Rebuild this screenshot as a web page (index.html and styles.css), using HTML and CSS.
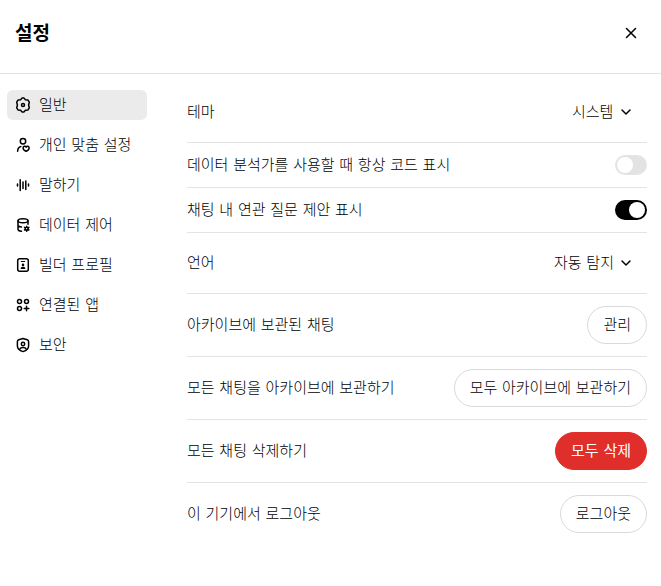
FILE: index.html
```
<!DOCTYPE html>
<html lang="ko">
<head>
  <meta charset="UTF-8">
  <meta name="viewport" content="width=device-width, initial-scale=1.0">
  <title>설정</title>
  <link rel="stylesheet" href="styles.css">
</head>
<body>
  <header class="header">
    <h1>설정</h1>
    <button class="close-btn" type="button" aria-label="닫기">
      <svg width="18" height="18" viewBox="0 0 18 18"><path d="M4.500 4.500l9 9M13.500 4.500l-9 9"/></svg>
    </button>
  </header>

  <div class="content">
    <nav class="menu">
      <button class="menu-item active" type="button">
        <svg viewBox="0 0 18 18"><path d="M7.900 2.100H10.100L11.400 3.700 14 4.100 15.300 6.200 14.600 9 15.300 11.800 14 13.900 11.400 14.300 10.100 15.900H7.900L6.600 14.300 4 13.900 2.700 11.800 3.400 9 2.700 6.200 4 4.100 6.600 3.700Z"/><circle cx="9" cy="9" r="1.500"/></svg>
        일반
      </button>
      <button class="menu-item" type="button">
        <svg viewBox="0 0 18 18"><circle cx="9" cy="5.200" r="2.700"/><path d="M3.600 15.200C3.800 12.600 5 11 6.800 10.500M12.100 15.300C10.200 14.400 9.100 13.200 9.100 11.900 9.100 10.100 11.300 9.700 12.100 11.100 12.900 9.700 15.100 10.100 15.100 11.900 15.100 13.200 14 14.400 12.100 15.300Z"/></svg>
        개인 맞춤 설정
      </button>
      <button class="menu-item" type="button">
        <svg viewBox="0 0 18 18"><path d="M3.500 8v2M6.200 3.800v10.600M9 6v6.500M11.800 5v8.500M14.500 8v2"/></svg>
        말하기
      </button>
      <button class="menu-item" type="button">
        <svg viewBox="0 0 18 18"><ellipse cx="9" cy="4.700" rx="5" ry="2"/><path d="M4 4.700v8.600c0 1.200 1.500 1.900 3.500 2M14 4.700v3.500M4 9c0 1 1.500 1.800 3.500 1.900"/><circle cx="12.700" cy="12.700" r="1.500"/><path d="M12.700 10.200v1M12.700 14.200v1M10.500 11.400l.9.500M14 13.500l.9.500M10.500 14l.9-.5M14 11.900l.9-.5"/></svg>
        데이터 제어
      </button>
      <button class="menu-item" type="button">
        <svg viewBox="0 0 18 18"><rect x="3.700" y="2.700" width="10.600" height="12.600" rx="2"/><path class="thin" d="M7.300 5.500h3.400M7.200 12.400c.5-1.300 3.100-1.300 3.600 0z"/><circle class="thin" cx="9" cy="8.900" r=".7"/></svg>
        빌더 프로필
      </button>
      <button class="menu-item" type="button">
        <svg viewBox="0 0 18 18"><circle cx="5.500" cy="5.500" r="2"/><circle cx="12.500" cy="5.500" r="2"/><circle cx="5.500" cy="12.500" r="2"/><path d="M12.500 10.200v4.600M10.200 12.500h4.600"/></svg>
        연결된 앱
      </button>
      <button class="menu-item" type="button">
        <svg viewBox="0 0 18 18"><path d="M9 2.500l4.300 1.300q1.300.5 1.300 1.800v4.400c0 2.700-2.300 4.600-5.600 5.600-3.300-1-5.600-2.900-5.600-5.600v-4.400q0-1.300 1.300-1.800z"/><circle cx="9" cy="8" r="1.700"/><path d="M5.700 13.300c1-2.300 5.600-2.300 6.600 0"/></svg>
        보안
      </button>
    </nav>

    <main class="settings">
      <div class="row">
        <label for="theme">테마</label>
        <span class="select-box">
          <select id="theme">
            <option>시스템</option>
          </select>
          <svg width="12" height="12" viewBox="0 0 12 12"><path d="M2 4l4 4 4-4"/></svg>
        </span>
      </div>
      <div class="row">
        <label for="show-code">데이터 분석가를 사용할 때 항상 코드 표시</label>
        <input class="switch" type="checkbox" id="show-code">
      </div>
      <div class="row">
        <label for="suggestions">채팅 내 연관 질문 제안 표시</label>
        <input class="switch" type="checkbox" id="suggestions" checked>
      </div>
      <div class="row">
        <label for="language">언어</label>
        <span class="select-box">
          <select id="language">
            <option>자동 탐지</option>
          </select>
          <svg width="12" height="12" viewBox="0 0 12 12"><path d="M2 4l4 4 4-4"/></svg>
        </span>
      </div>
      <div class="row">
        <span id="archived-label">아카이브에 보관된 채팅</span>
        <button class="btn" type="button" aria-describedby="archived-label">관리</button>
      </div>
      <div class="row">
        <span id="archive-label">모든 채팅을 아카이브에 보관하기</span>
        <button class="btn" type="button" aria-describedby="archive-label">모두 아카이브에 보관하기</button>
      </div>
      <div class="row">
        <span id="delete-label">모든 채팅 삭제하기</span>
        <button class="btn btn-danger" type="button" aria-describedby="delete-label">모두 삭제</button>
      </div>
      <div class="row">
        <span id="logout-label">이 기기에서 로그아웃</span>
        <button class="btn" type="button" aria-describedby="logout-label">로그아웃</button>
      </div>
    </main>
  </div>
</body>
</html>
```
FILE: styles.css
```
* {
  box-sizing: border-box;
}
body {
  margin: 0;
  background: #fff;
  color: #000;
  font-family: "DejaVu Sans", "Noto Sans CJK KR", sans-serif;
  font-size: 15px;
  font-weight: 300;
  line-height: 20px;
}
button, select {
  font: inherit;
  color: inherit;
  cursor: pointer;
}
svg {
  flex-shrink: 0;
  fill: none;
  stroke: currentColor;
  stroke-width: 1.5;
  stroke-linecap: round;
  stroke-linejoin: round;
}
svg .thin {
  stroke-width: 1.2;
}

/* Header */
.header {
  display: flex;
  align-items: center;
  justify-content: space-between;
  padding: 18px 15px 25px;
  border-bottom: 1px solid #e3e3e3;
}
.header h1 {
  margin: 0;
  font-size: 19px;
  line-height: 28px;
  font-weight: bold;
}
.close-btn {
  display: flex;
  padding: 6px;
  border: none;
  background: none;
}

/* Layout */
.content {
  display: flex;
  gap: 40px;
  padding: 8px 14px 8px 7px;
}

/* Menu */
.menu {
  display: flex;
  flex-direction: column;
  flex: 0 0 140px;
  gap: 10px;
  padding-top: 8px;
}
.menu-item {
  display: flex;
  align-items: center;
  gap: 7px;
  height: 30px;
  padding: 0 7px;
  border: none;
  border-radius: 6px;
  background: none;
  text-align: left;
  white-space: nowrap;
}
.menu-item svg {
  width: 18px;
  height: 18px;
}
.menu-item.active {
  background: #ebebeb;
}

/* Settings */
.settings {
  flex: 1;
  min-width: 0;
}
.row {
  display: flex;
  align-items: center;
  justify-content: space-between;
  padding: 12px 0;
  border-bottom: 1px solid #e3e3e3;
}
.row:last-child {
  border-bottom: none;
}
.select-box {
  display: flex;
  align-items: center;
  gap: 6px;
  height: 36px;
  padding-right: 15px;
}
.select-box select {
  appearance: none;
  padding: 0;
  border: none;
  background: none;
}
.btn {
  height: 38px;
  padding: 0 15px;
  border: 1px solid #d9d9d9;
  border-radius: 19px;
  background: #fff;
}
.btn-danger {
  border-color: #e02e2a;
  background: #e02e2a;
  color: #fff;
  font-weight: 400;
}
.switch {
  appearance: none;
  display: flex;
  width: 32px;
  height: 20px;
  margin: 0;
  padding: 2px;
  border-radius: 10px;
  background: #e3e3e3;
  cursor: pointer;
}
.switch::before {
  content: "";
  width: 16px;
  height: 16px;
  border-radius: 50%;
  background: #fff;
}
.switch:checked {
  justify-content: flex-end;
  background: #000;
}
```
